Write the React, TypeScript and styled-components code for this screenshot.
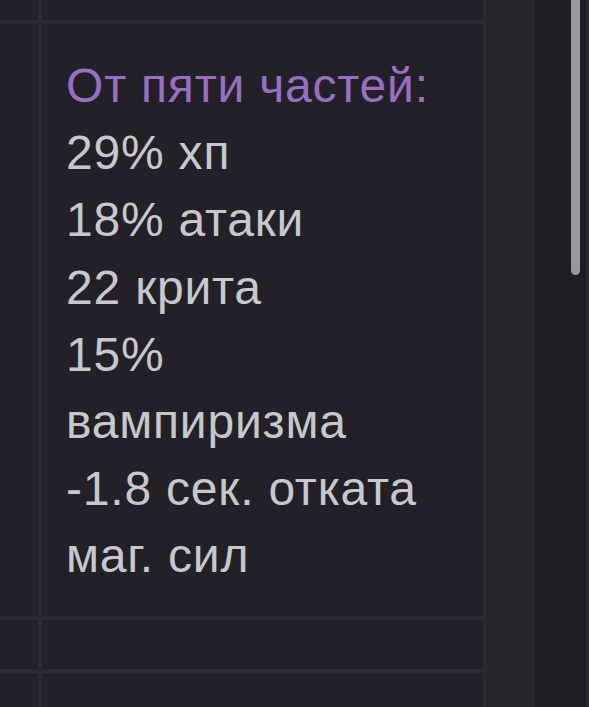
import React from "react";
import styled, { createGlobalStyle } from "styled-components";

const GlobalStyle = createGlobalStyle`
  html, body {
    margin: 0;
    padding: 0;
    background: #222127;
    overflow: hidden;
  }
  #root {
    height: 707px;
  }
`;

const Page = styled.div`
  display: flex;
  height: 707px;
  background: #222127;
  font-family: "Liberation Sans", Arial, sans-serif;
`;

const Table = styled.div`
  display: grid;
  grid-template-columns: 38px 441px;
  grid-template-rows: 20px 592px 49px 49px;
  gap: 4px;
  width: 483px;
  background: #2c2b31;
  align-content: start;
  overflow: hidden;
`;

const Cell = styled.div`
  background: #222127;
`;

const TextCell = styled(Cell)`
  padding: 28px 24px;
  font-size: 48px;
  line-height: 1.4;
  letter-spacing: 0.8px;
  color: #c8c8cb;
`;

const Lines = styled.div`
  width: 376px;
`;

const Line = styled.div<{ $accent?: boolean }>`
  color: ${(p) => (p.$accent ? "#9a6ec5" : "#c8c8cb")};
`;

const Divider = styled.div<{ $w: number; $c: string }>`
  width: ${(p) => p.$w}px;
  background: ${(p) => p.$c};
  flex-shrink: 0;
`;

const SideStrip = styled.div`
  width: 49px;
  background: #27262b;
  flex-shrink: 0;
`;

const ScrollTrack = styled.div`
  width: 51px;
  background: #1f1e23;
  flex-shrink: 0;
  display: flex;
  justify-content: flex-end;
  padding-right: 6px;
  box-sizing: border-box;
`;

const Thumb = styled.div`
  width: 9px;
  height: 285px;
  margin-top: -10px;
  background: #9a9a9c;
  border-radius: 5px;
`;

const lines = [
  "29% хп",
  "18% атаки",
  "22 крита",
  "15% вампиризма",
  "-1.8 сек. отката маг. сил",
];

export default function App() {
  return (
    <>
      <GlobalStyle />
      <Page>
        <Table>
          <Cell />
          <Cell />
          <Cell />
          <TextCell>
            <Lines>
              <Line $accent>От пяти частей:</Line>
              {lines.map((l) => (
                <Line key={l}>{l}</Line>
              ))}
            </Lines>
          </TextCell>
          <Cell />
          <Cell />
          <Cell />
          <Cell />
        </Table>
        <Divider $w={3} $c="#2c2b31" />
        <SideStrip />
        <ScrollTrack>
          <Thumb />
        </ScrollTrack>
        <Divider $w={3} $c="#29282d" />
      </Page>
    </>
  );
}
